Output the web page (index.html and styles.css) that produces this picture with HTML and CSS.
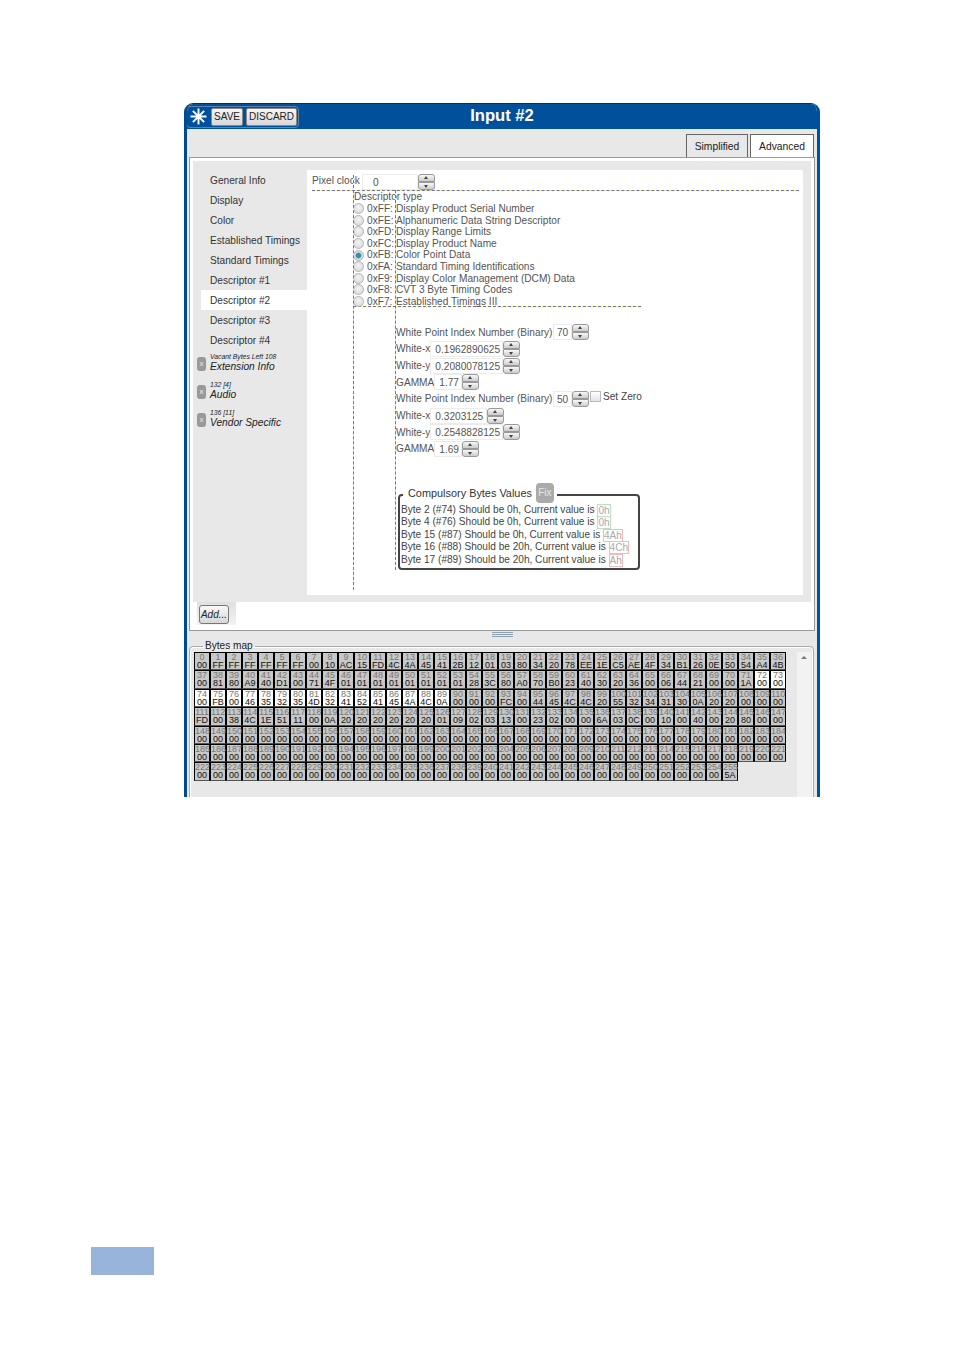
FILE: index.html
```html
<!DOCTYPE html>
<html lang="en">
<head>
<meta charset="utf-8">
<title>Input #2</title>
<link rel="stylesheet" href="styles.css">
</head>
<body>
<div class="page">
<div class="win">
  <header class="head">
    <div class="tools">
      <svg class="star" viewBox="0 0 16 16" aria-hidden="true"><path d="M8 0.5v15M0.5 8h15M2.7 2.7l10.6 10.6M13.3 2.7L2.7 13.3"/></svg>
      <button class="tool save">SAVE</button>
      <button class="tool discard">DISCARD</button>
    </div>
    <h1 class="title">Input #2</h1>
  </header>
  <div class="tabs">
    <div class="tab">Simplified</div>
    <div class="tab tab-on">Advanced</div>
  </div>
  <div class="panel">
    <div class="inner">
      <nav class="nav">
        <div class="nav-item">General Info</div>
        <div class="nav-item">Display</div>
        <div class="nav-item">Color</div>
        <div class="nav-item">Established Timings</div>
        <div class="nav-item">Standard Timings</div>
        <div class="nav-item">Descriptor #1</div>
        <div class="nav-item nav-on">Descriptor #2</div>
        <div class="nav-item">Descriptor #3</div>
        <div class="nav-item">Descriptor #4</div>
        <div class="nav-ext"><span class="x">x</span><div class="ext-text"><small>Vacant Bytes Left 108</small><em>Extension Info</em></div></div>
        <div class="nav-ext"><span class="x">x</span><div class="ext-text"><small>132 [4]</small><em>Audio</em></div></div>
        <div class="nav-ext"><span class="x">x</span><div class="ext-text"><small>136 [11]</small><em>Vendor Specific</em></div></div>
      </nav>
      <main class="content">
        <span class="guide guide-a"></span>
        <span class="guide guide-b"></span>
        <div class="clock">
          <span>Pixel clock :</span>
          <span class="field f-clock">0</span>
          <span class="spin"><i></i><i class="dn"></i></span>
        </div>
        <div class="desc">
          <div class="desc-title">Descriptor type</div>
          <div class="opt"><span class="radio"></span><span class="hex">0xFF:</span>Display Product Serial Number</div>
          <div class="opt"><span class="radio"></span><span class="hex">0xFE:</span>Alphanumeric Data String Descriptor</div>
          <div class="opt"><span class="radio"></span><span class="hex">0xFD:</span>Display Range Limits</div>
          <div class="opt"><span class="radio"></span><span class="hex">0xFC:</span>Display Product Name</div>
          <div class="opt"><span class="radio radio-on"></span><span class="hex">0xFB:</span>Color Point Data</div>
          <div class="opt"><span class="radio"></span><span class="hex">0xFA:</span>Standard Timing Identifications</div>
          <div class="opt"><span class="radio"></span><span class="hex">0xF9:</span>Display Color Management (DCM) Data</div>
          <div class="opt"><span class="radio"></span><span class="hex">0xF8:</span>CVT 3 Byte Timing Codes</div>
          <div class="opt"><span class="radio"></span><span class="hex">0xF7:</span>Established Timings III</div>
        </div>
        <div class="form">
          <div class="row">White Point Index Number (Binary)<span class="field f-idx">70</span><span class="spin"><i></i><i class="dn"></i></span></div>
          <div class="row">White-x<span class="field f-long">0.1962890625</span><span class="spin"><i></i><i class="dn"></i></span></div>
          <div class="row">White-y<span class="field f-long">0.2080078125</span><span class="spin"><i></i><i class="dn"></i></span></div>
          <div class="row">GAMMA<span class="field f-gam">1.77</span><span class="spin"><i></i><i class="dn"></i></span></div>
          <div class="row">White Point Index Number (Binary)<span class="field f-idx">50</span><span class="spin"><i></i><i class="dn"></i></span><span class="check"></span><span class="zero">Set Zero</span></div>
          <div class="row">White-x<span class="field f-mid">0.3203125</span><span class="spin"><i></i><i class="dn"></i></span></div>
          <div class="row">White-y<span class="field f-long">0.2548828125</span><span class="spin"><i></i><i class="dn"></i></span></div>
          <div class="row">GAMMA<span class="field f-gam">1.69</span><span class="spin"><i></i><i class="dn"></i></span></div>
        </div>
        <fieldset class="comp">
          <legend class="comp-legend">Compulsory Bytes Values<span class="fix">Fix</span></legend>
          <div class="line">Byte 2 (#74) Should be 0h, Current value is <span class="val ok">0h</span></div>
          <div class="line">Byte 4 (#76) Should be 0h, Current value is <span class="val ok">0h</span></div>
          <div class="line">Byte 15 (#87) Should be 0h, Current value is <span class="val bad">4Ah</span></div>
          <div class="line">Byte 16 (#88) Should be 20h, Current value is <span class="val bad">4Ch</span></div>
          <div class="line">Byte 17 (#89) Should be 20h, Current value is <span class="val bad">Ah</span></div>
        </fieldset>
      </main>
    </div>
    <div class="addbar"><div class="addbox"><button class="add">Add...</button></div></div>
  </div>
  <div class="split"><span class="handle"></span></div>
  <fieldset class="map">
    <legend class="map-legend">Bytes map</legend>
    <div class="map-body">
      <div class="grid">
<div class="c"><i>0</i>00</div><div class="c"><i>1</i>FF</div><div class="c"><i>2</i>FF</div><div class="c"><i>3</i>FF</div><div class="c"><i>4</i>FF</div><div class="c"><i>5</i>FF</div><div class="c"><i>6</i>FF</div><div class="c"><i>7</i>00</div><div class="c"><i>8</i>10</div><div class="c"><i>9</i>AC</div><div class="c"><i>10</i>15</div><div class="c"><i>11</i>FD</div><div class="c"><i>12</i>4C</div><div class="c"><i>13</i>4A</div><div class="c"><i>14</i>45</div><div class="c"><i>15</i>41</div><div class="c"><i>16</i>2B</div><div class="c"><i>17</i>12</div><div class="c"><i>18</i>01</div><div class="c"><i>19</i>03</div><div class="c"><i>20</i>80</div><div class="c"><i>21</i>34</div><div class="c"><i>22</i>20</div><div class="c"><i>23</i>78</div><div class="c"><i>24</i>EE</div><div class="c"><i>25</i>1E</div><div class="c"><i>26</i>C5</div><div class="c"><i>27</i>AE</div><div class="c"><i>28</i>4F</div><div class="c"><i>29</i>34</div><div class="c"><i>30</i>B1</div><div class="c"><i>31</i>26</div><div class="c"><i>32</i>0E</div><div class="c"><i>33</i>50</div><div class="c"><i>34</i>54</div><div class="c"><i>35</i>A4</div><div class="c"><i>36</i>4B</div>
<div class="c"><i>37</i>00</div><div class="c"><i>38</i>81</div><div class="c"><i>39</i>80</div><div class="c"><i>40</i>A9</div><div class="c"><i>41</i>40</div><div class="c"><i>42</i>D1</div><div class="c"><i>43</i>00</div><div class="c"><i>44</i>71</div><div class="c"><i>45</i>4F</div><div class="c"><i>46</i>01</div><div class="c"><i>47</i>01</div><div class="c"><i>48</i>01</div><div class="c"><i>49</i>01</div><div class="c"><i>50</i>01</div><div class="c"><i>51</i>01</div><div class="c"><i>52</i>01</div><div class="c"><i>53</i>01</div><div class="c"><i>54</i>28</div><div class="c"><i>55</i>3C</div><div class="c"><i>56</i>80</div><div class="c"><i>57</i>A0</div><div class="c"><i>58</i>70</div><div class="c"><i>59</i>B0</div><div class="c"><i>60</i>23</div><div class="c"><i>61</i>40</div><div class="c"><i>62</i>30</div><div class="c"><i>63</i>20</div><div class="c"><i>64</i>36</div><div class="c"><i>65</i>00</div><div class="c"><i>66</i>06</div><div class="c"><i>67</i>44</div><div class="c"><i>68</i>21</div><div class="c"><i>69</i>00</div><div class="c"><i>70</i>00</div><div class="c"><i>71</i>1A</div><div class="c w"><i>72</i>00</div><div class="c w"><i>73</i>00</div>
<div class="c w"><i>74</i>00</div><div class="c w"><i>75</i>FB</div><div class="c w"><i>76</i>00</div><div class="c w"><i>77</i>46</div><div class="c w"><i>78</i>35</div><div class="c w"><i>79</i>32</div><div class="c w"><i>80</i>35</div><div class="c w"><i>81</i>4D</div><div class="c w"><i>82</i>32</div><div class="c w"><i>83</i>41</div><div class="c w"><i>84</i>52</div><div class="c w"><i>85</i>41</div><div class="c w"><i>86</i>45</div><div class="c w"><i>87</i>4A</div><div class="c w"><i>88</i>4C</div><div class="c w"><i>89</i>0A</div><div class="c"><i>90</i>00</div><div class="c"><i>91</i>00</div><div class="c"><i>92</i>00</div><div class="c"><i>93</i>FC</div><div class="c"><i>94</i>00</div><div class="c"><i>95</i>44</div><div class="c"><i>96</i>45</div><div class="c"><i>97</i>4C</div><div class="c"><i>98</i>4C</div><div class="c"><i>99</i>20</div><div class="c"><i>100</i>55</div><div class="c"><i>101</i>32</div><div class="c"><i>102</i>34</div><div class="c"><i>103</i>31</div><div class="c"><i>104</i>30</div><div class="c"><i>105</i>0A</div><div class="c"><i>106</i>20</div><div class="c"><i>107</i>20</div><div class="c"><i>108</i>00</div><div class="c"><i>109</i>00</div><div class="c"><i>110</i>00</div>
<div class="c"><i>111</i>FD</div><div class="c"><i>112</i>00</div><div class="c"><i>113</i>38</div><div class="c"><i>114</i>4C</div><div class="c"><i>115</i>1E</div><div class="c"><i>116</i>51</div><div class="c"><i>117</i>11</div><div class="c"><i>118</i>00</div><div class="c"><i>119</i>0A</div><div class="c"><i>120</i>20</div><div class="c"><i>121</i>20</div><div class="c"><i>122</i>20</div><div class="c"><i>123</i>20</div><div class="c"><i>124</i>20</div><div class="c"><i>125</i>20</div><div class="c"><i>126</i>01</div><div class="c"><i>127</i>09</div><div class="c"><i>128</i>02</div><div class="c"><i>129</i>03</div><div class="c"><i>130</i>13</div><div class="c"><i>131</i>00</div><div class="c"><i>132</i>23</div><div class="c"><i>133</i>02</div><div class="c"><i>134</i>00</div><div class="c"><i>135</i>00</div><div class="c"><i>136</i>6A</div><div class="c"><i>137</i>03</div><div class="c"><i>138</i>0C</div><div class="c"><i>139</i>00</div><div class="c"><i>140</i>10</div><div class="c"><i>141</i>00</div><div class="c"><i>142</i>40</div><div class="c"><i>143</i>00</div><div class="c"><i>144</i>20</div><div class="c"><i>145</i>80</div><div class="c"><i>146</i>00</div><div class="c"><i>147</i>00</div>
<div class="c"><i>148</i>00</div><div class="c"><i>149</i>00</div><div class="c"><i>150</i>00</div><div class="c"><i>151</i>00</div><div class="c"><i>152</i>00</div><div class="c"><i>153</i>00</div><div class="c"><i>154</i>00</div><div class="c"><i>155</i>00</div><div class="c"><i>156</i>00</div><div class="c"><i>157</i>00</div><div class="c"><i>158</i>00</div><div class="c"><i>159</i>00</div><div class="c"><i>160</i>00</div><div class="c"><i>161</i>00</div><div class="c"><i>162</i>00</div><div class="c"><i>163</i>00</div><div class="c"><i>164</i>00</div><div class="c"><i>165</i>00</div><div class="c"><i>166</i>00</div><div class="c"><i>167</i>00</div><div class="c"><i>168</i>00</div><div class="c"><i>169</i>00</div><div class="c"><i>170</i>00</div><div class="c"><i>171</i>00</div><div class="c"><i>172</i>00</div><div class="c"><i>173</i>00</div><div class="c"><i>174</i>00</div><div class="c"><i>175</i>00</div><div class="c"><i>176</i>00</div><div class="c"><i>177</i>00</div><div class="c"><i>178</i>00</div><div class="c"><i>179</i>00</div><div class="c"><i>180</i>00</div><div class="c"><i>181</i>00</div><div class="c"><i>182</i>00</div><div class="c"><i>183</i>00</div><div class="c"><i>184</i>00</div>
<div class="c"><i>185</i>00</div><div class="c"><i>186</i>00</div><div class="c"><i>187</i>00</div><div class="c"><i>188</i>00</div><div class="c"><i>189</i>00</div><div class="c"><i>190</i>00</div><div class="c"><i>191</i>00</div><div class="c"><i>192</i>00</div><div class="c"><i>193</i>00</div><div class="c"><i>194</i>00</div><div class="c"><i>195</i>00</div><div class="c"><i>196</i>00</div><div class="c"><i>197</i>00</div><div class="c"><i>198</i>00</div><div class="c"><i>199</i>00</div><div class="c"><i>200</i>00</div><div class="c"><i>201</i>00</div><div class="c"><i>202</i>00</div><div class="c"><i>203</i>00</div><div class="c"><i>204</i>00</div><div class="c"><i>205</i>00</div><div class="c"><i>206</i>00</div><div class="c"><i>207</i>00</div><div class="c"><i>208</i>00</div><div class="c"><i>209</i>00</div><div class="c"><i>210</i>00</div><div class="c"><i>211</i>00</div><div class="c"><i>212</i>00</div><div class="c"><i>213</i>00</div><div class="c"><i>214</i>00</div><div class="c"><i>215</i>00</div><div class="c"><i>216</i>00</div><div class="c"><i>217</i>00</div><div class="c"><i>218</i>00</div><div class="c"><i>219</i>00</div><div class="c"><i>220</i>00</div><div class="c"><i>221</i>00</div>
<div class="c"><i>222</i>00</div><div class="c"><i>223</i>00</div><div class="c"><i>224</i>00</div><div class="c"><i>225</i>00</div><div class="c"><i>226</i>00</div><div class="c"><i>227</i>00</div><div class="c"><i>228</i>00</div><div class="c"><i>229</i>00</div><div class="c"><i>230</i>00</div><div class="c"><i>231</i>00</div><div class="c"><i>232</i>00</div><div class="c"><i>233</i>00</div><div class="c"><i>234</i>00</div><div class="c"><i>235</i>00</div><div class="c"><i>236</i>00</div><div class="c"><i>237</i>00</div><div class="c"><i>238</i>00</div><div class="c"><i>239</i>00</div><div class="c"><i>240</i>00</div><div class="c"><i>241</i>00</div><div class="c"><i>242</i>00</div><div class="c"><i>243</i>00</div><div class="c"><i>244</i>00</div><div class="c"><i>245</i>00</div><div class="c"><i>246</i>00</div><div class="c"><i>247</i>00</div><div class="c"><i>248</i>00</div><div class="c"><i>249</i>00</div><div class="c"><i>250</i>00</div><div class="c"><i>251</i>00</div><div class="c"><i>252</i>00</div><div class="c"><i>253</i>00</div><div class="c"><i>254</i>00</div><div class="c"><i>255</i>5A</div>
      </div>
      <div class="track"><span class="arrow"></span></div>
    </div>
  </fieldset>
</div>
<div class="pagemark"></div>
</div>
</body>
</html>
```
FILE: styles.css
```css
* { box-sizing: border-box; }
html, body { margin: 0; padding: 0; background: #fff; }
body { width: 954px; height: 1354px; overflow: hidden; font-family: "Liberation Sans", Arial, sans-serif; font-size: 10.15px; color: #555; }
.page { padding-top: 103px; }

.win { width: 636px; height: 694px; margin-left: 184px; background: #e8e8e8; border: 3px solid #01509b; border-top: 1px solid #0c2f55; border-bottom: 0; border-left-color: #024a90; border-radius: 9px 9px 0 0; overflow: hidden; }

.head { height: 25px; background: #01509b; display: flex; align-items: center; position: relative; }
.tools { margin-left: -1px; height: 22px; width: 113px; border: 1px solid #5d83ad; border-radius: 4px; display: flex; align-items: center; padding-left: 3px; }
.star { width: 17px; height: 17px; flex: none; }
.star path { stroke: #fff; stroke-width: 1.8; fill: none; }
.tool { font: 10px/1 "Liberation Sans", Arial, sans-serif; color: #222; height: 18px; padding: 0; border: 1px solid #8a8a8a; border-radius: 2px; background: linear-gradient(#f6f6f6, #d8d8d8); }
.save { width: 32px; margin-left: 4px; }
.discard { width: 51px; margin-left: 3px; }
.title { position: absolute; left: 0; right: 0; top: 0; margin: 0; text-align: center; font-size: 16.6px; line-height: 24px; color: #fff; font-weight: bold; }

.tabs { height: 28px; display: flex; justify-content: flex-end; align-items: flex-end; gap: 2px; padding-right: 3px; }
.tab { width: 62px; height: 23px; border: 1px solid #666; border-bottom: 0; background: #e8e8e8; color: #222; text-align: center; line-height: 23px; font-size: 10.3px; position: relative; }
.tab-on { width: 64px; background: #fff; }

.panel { margin: 0 2px; height: 474px; background: #fff; border: 1px solid #999; padding: 3px 3px 0; }
.inner { height: 441px; background: #e8e8e8; padding: 9px 8px 7px 4px; display: flex; }
.nav { width: 110px; flex: none; color: #333; font-size: 10.15px; }
.nav-item { height: 20px; line-height: 21px; margin-left: 4px; padding-left: 9px; white-space: nowrap; }
.nav-on { background: #fff; }
.nav-ext { height: 28px; display: flex; align-items: center; gap: 4px; }
.ext-text { margin-top: -3px; }
.nav-ext small { display: block; font-size: 6.8px; line-height: 8px; font-style: italic; color: #222; white-space: nowrap; }
.nav-ext em { display: block; font-size: 10.2px; line-height: 11px; color: #222; white-space: nowrap; }
.x { width: 9px; height: 14px; flex: none; border-radius: 3px; background: #999; color: #eee; font-size: 8px; line-height: 13px; text-align: center; }

.content { flex: 1; background: #fff; position: relative; min-width: 0; }
.guide { position: absolute; width: 1px; border-left: 1px dashed #6a6aee; background: #ff5; }
.guide-a { left: 46px; top: 5px; height: 415px; }
.guide-b { left: 88px; top: 20px; height: 380px; }

.clock { margin: 4px 4px 0 5px; height: 17px; display: flex; border-bottom: 1px dashed #6a6aee; background: linear-gradient(transparent 16px, #ff5 16px) border-box; line-height: 14px; }
.clock > span:first-child { width: 50px; flex: none; white-space: nowrap; }
.field { display: inline-block; height: 16px; line-height: 16px; border: 1px solid #ececec; background: #fff; padding-left: 4px; color: #555; white-space: nowrap; }
.f-clock { width: 56px; padding-left: 10px; }
.f-idx { width: 19px; margin-left: 0.5px; padding-left: 3px; }
.f-long { width: 73px; margin-left: 0; }
.f-mid { width: 57px; }
.f-gam { width: 28px; }
.spin { display: inline-flex; flex-direction: column; width: 17px; height: 16px; flex: none; gap: 0; }
.spin i { display: block; height: 8px; border: 1px solid #999; border-radius: 3px 3px 0 0; background: linear-gradient(#f8f8f8, #ccc); position: relative; }
.spin i.dn { border-radius: 0 0 3px 3px; }
.spin i::after { content: ""; position: absolute; left: 5px; top: 1px; border: 2px solid transparent; border-top: 0; border-bottom: 3px solid #444; }
.spin i.dn::after { border-bottom: 0; border-top: 3px solid #444; top: 2px; }

.desc { margin-left: 46px; width: 288px; border-bottom: 1px dashed #6a6aee; background: linear-gradient(transparent 115px, #ff5 115px) border-box; height: 116px; }
.desc-title { height: 12px; line-height: 12px; padding-left: 1px; }
.opt { height: 11.6px; line-height: 11.6px; display: flex; align-items: center; white-space: nowrap; }
.radio { width: 11px; height: 11px; flex: none; border-radius: 50%; border: 1px solid #b4b4b4; background: radial-gradient(circle at 50% 40%, #f4f4f4, #d4d4d4); }
.radio-on { background: radial-gradient(circle, #3a8fb0 0 2.2px, #d8e0e4 3.4px); }
.hex { width: 32px; padding-left: 3px; flex: none; }

.form { margin: 16.8px 0 0 89px; }
.row { height: 16.7px; display: flex; align-items: center; white-space: nowrap; position: relative; }
.check { width: 11px; height: 11px; border: 1px solid #bbb; background: linear-gradient(#fff, #e4e4e4); margin: -4px 0 0 1px; }
.zero { margin: -4px 0 0 2px; color: #444; }

.comp { margin: 26px 0 0 91px; width: 242px; padding: 0 0 2px 1px; border: 2px solid #444; border-radius: 4px; color: #444; }
.comp-legend { margin: 0 0 -3.3px 2px; padding: 0 3px 4px 5px; display: flex; align-items: flex-start; font-weight: normal; color: #333; font-size: 10.9px; line-height: 20px; }
.fix { width: 18px; height: 20px; margin-left: 4px; border-radius: 4px; background: #aaa; color: #e8e8e8; font-size: 10px; text-align: center; line-height: 20px; }
.line { height: 12.4px; line-height: 12.4px; font-size: 10.1px; white-space: nowrap; }
.val { display: inline-block; line-height: 11px; height: 13px; padding: 0; color: #aaa; border: 1px solid; vertical-align: top; }
.ok { border-color: #bfe0bf; }
.bad { border-color: #f6b8b8; }

.addbar { height: 23px; padding-left: 4px; }
.addbox { width: 39px; height: 23px; background: linear-gradient(#e0e0e0, #f2f2f2); padding: 3px 0 0 2px; }
.add { width: 30px; height: 19px; padding: 0; border: 1px solid #777; border-radius: 3px; background: linear-gradient(#f8f8f8, #d8d8d8); font: italic 10px/1 "Liberation Sans", Arial, sans-serif; color: #222; }

.split { height: 9px; display: flex; justify-content: center; padding-top: 1px; }
.handle { width: 21px; height: 5px; border-top: 1px solid #8da0b4; border-bottom: 1px solid #8da0b4; background: linear-gradient(#e8e8e8 1px, #8da0b4 1px, #8da0b4 2px, #e8e8e8 2px); }

.map { margin: 0 0 0 2px; width: 625px; padding: 0 0 0 4px; border: 1px solid #aaa; border-radius: 4px; box-shadow: inset 0 0 0 1px #fff; min-width: 0; }
.map-legend { margin-left: 9px; padding: 0 2px; line-height: 12px; color: #222; font-size: 10.1px; }
.map-body { display: flex; height: 170px; }
.grid { width: 593px; height: 129.8px; display: grid; grid-template-columns: repeat(37, 16px); grid-auto-rows: 18.4px; align-self: flex-start; }
.c { border: 1px solid #000; border-bottom-color: #555; background: #c8c8c8; color: #111; font-size: 9px; line-height: 8px; text-align: center; white-space: nowrap; overflow: visible; }
.c i { display: block; font-style: normal; color: #777; height: 8px; line-height: 8px; }
.w { background: #fff; }
.track { width: 14px; margin: 0 2px 0 auto; background: #f2f2f2; display: flex; justify-content: center; padding-top: 4px; }
.arrow { width: 0; height: 0; border: 3px solid transparent; border-top: 0; border-bottom: 3px solid #777; }

.pagemark { width: 63px; height: 28px; margin: 450px 0 0 91px; background: #98b4da; }
```
